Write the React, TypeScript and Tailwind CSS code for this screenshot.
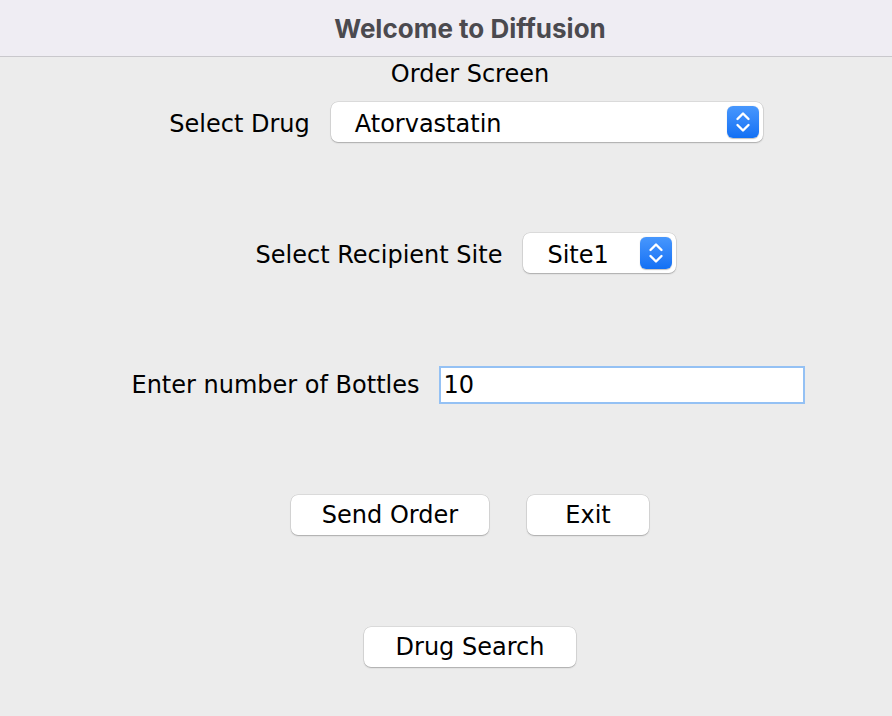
import React from "react";

const labelFont = { fontFamily: '"DejaVu Sans", "Open Sans", sans-serif' };

function Stepper() {
  return (
    <span className="flex h-[32px] w-[32px] shrink-0 items-center justify-center rounded-[6px] bg-gradient-to-b from-[#4797fd] to-[#1170f4] shadow-[0_0.5px_1px_rgba(0,0,0,0.25)]">
      <svg width="32" height="32" viewBox="0 0 32 32" fill="none">
        <path d="M10.5 13 L16 7.5 L21.5 13" stroke="white" strokeWidth="2.4" strokeLinecap="round" strokeLinejoin="round" />
        <path d="M10.5 19 L16 24.5 L21.5 19" stroke="white" strokeWidth="2.4" strokeLinecap="round" strokeLinejoin="round" />
      </svg>
    </span>
  );
}

function Combo({ value, width }: { value: string; width: string }) {
  return (
    <div
      className={`flex h-[40px] ${width} items-center justify-between rounded-[7px] bg-white pl-[24px] pr-[4px] shadow-[0_0_0_0.5px_rgba(0,0,0,0.14),0_1px_1.5px_rgba(0,0,0,0.22)]`}
    >
      <span className="pt-[4px] text-[24px] leading-[28px] text-black">{value}</span>
      <Stepper />
    </div>
  );
}

function Button({ label, width }: { label: string; width: string }) {
  return (
    <button
      className={`flex h-[40px] ${width} items-center justify-center rounded-[7px] bg-white text-[24px] leading-[28px] text-black shadow-[0_0_0_0.5px_rgba(0,0,0,0.14),0_1px_1.5px_rgba(0,0,0,0.22)]`}
    >
      {label}
    </button>
  );
}

export default function App() {
  return (
    <div className="h-[716px] w-[892px] overflow-hidden bg-[#ececec]">
      <div className="w-[940px]" style={labelFont}>
        <header className="flex h-[57px] items-center justify-center border-b border-[#c9c8cc] bg-[#efedf3]">
          <h1 className="font-['Inter',sans-serif] text-[26px] font-bold tracking-[0px] text-[#4b4a4f]">
            Welcome to Diffusion
          </h1>
        </header>

        <div className="flex flex-col items-center">
          <p className="mt-[3px] h-[28px] text-[24px] leading-[28px] text-black">Order Screen</p>

          <div className="mt-[14px] flex items-baseline gap-[21px] pr-[8px]">
            <span className="text-[24px] leading-[28px] text-black">Select Drug</span>
            <Combo value="Atorvastatin" width="w-[432px]" />
          </div>

          <div className="mt-[91px] flex items-baseline gap-[21px] pr-[8px]">
            <span className="text-[24px] leading-[28px] text-black">Select Recipient Site</span>
            <Combo value="Site1" width="w-[153px]" />
          </div>

          <div className="mt-[93px] flex items-baseline gap-[19px] pr-[4px]">
            <span className="text-[24px] leading-[28px] text-black">Enter number of Bottles</span>
            <input
              defaultValue="10"
              className="h-[38px] w-[366px] border-2 border-[#94c1f4] bg-white px-[3px] text-[24px] leading-[28px] text-black outline-none"
              style={labelFont}
            />
          </div>

          <div className="mt-[91px] flex gap-[38px]">
            <Button label="Send Order" width="w-[198px]" />
            <Button label="Exit" width="w-[122px]" />
          </div>

          <div className="mt-[92px] flex">
            <Button label="Drug Search" width="w-[212px]" />
          </div>
        </div>
      </div>
    </div>
  );
}
